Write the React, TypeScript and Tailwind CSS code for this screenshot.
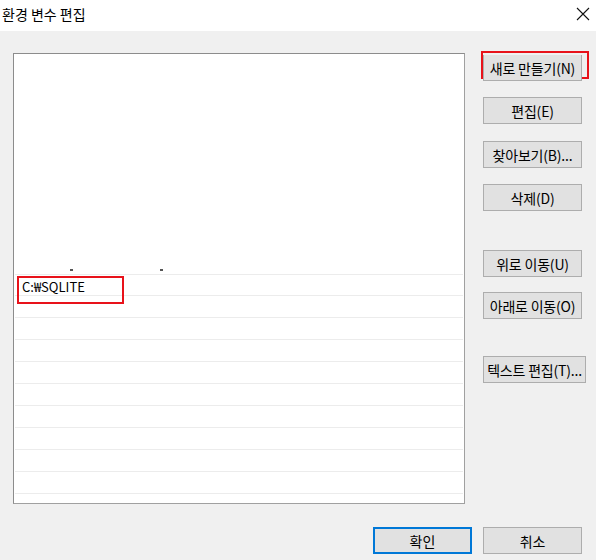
import React from "react";

const F = "font-['Noto_Sans_CJK_KR',sans-serif]";

function Btn({ label, className = "", w = "w-[99px]" }: { label: string; className?: string; w?: string }) {
  return (
    <div
      className={`${w} h-[27px] bg-[#e1e1e1] border border-[#adadad] flex items-center justify-center text-[14px] tracking-[-0.2px] text-black leading-none whitespace-nowrap ${className}`}
    >
      {label}
    </div>
  );
}

export default function App() {
  const lowerRows = Array.from({ length: 10 });
  const upperRows = Array.from({ length: 9 });
  return (
    <div className={`w-[596px] h-[560px] flex flex-col bg-[#f0f0f0] overflow-hidden ${F}`}>
      <div className="h-[31px] bg-white flex items-center justify-between pl-[2px] pr-[6px]">
        <span className="text-[14px] text-black leading-none -mt-[4px]">환경 변수 편집</span>
        <svg width="14" height="14" viewBox="0 0 14 14" className="-mt-[4px]">
          <path d="M1 1 L13 13 M13 1 L1 13" stroke="#111" strokeWidth="1.1" />
        </svg>
      </div>
      <div className="flex-1 flex flex-col">
        <div className="flex">
          <div className="ml-[13px] mt-[22px] w-[452px] h-[451px] bg-white border border-[#a0a0a0] border-t-[#8c8c8c] border-l-[#8c8c8c] px-[1px] flex flex-col">
            {upperRows.map((_, i) => (
              <div key={i} className="h-[22px] shrink-0" />
            ))}
            <div className="h-[22px] shrink-0 relative">
              <span className="absolute left-[55px] top-[17px] w-[3px] h-[2px] bg-[#555]" />
              <span className="absolute left-[145px] top-[17px] w-[3px] h-[2px] bg-[#555]" />
            </div>
            {lowerRows.map((_, i) => (
              <div
                key={i}
                className={`h-[22px] shrink-0 border-b border-[#ececec] ${i === 0 ? "border-t" : ""} flex items-center relative`}
              >
                {i === 0 && (
                  <div className="absolute left-[2px] top-[1px] w-[107px] h-[28px] border-2 border-[#e8121a] flex items-start pl-[3px] pt-[0px]">
                    <span className="text-[13px] leading-[17px] text-black">C:₩SQLITE</span>
                  </div>
                )}
              </div>
            ))}
          </div>
          <div className="ml-[18px] mt-[20px] flex flex-col">
            <div className="border-2 border-[#e8121a] w-[108px] h-[28px] -ml-[2px] flex">
              <div className="mt-[2px] w-[99px] h-[26px] bg-[#e1e1e1] border border-[#adadad] border-t-0 flex items-center justify-center text-[14px] tracking-[-0.2px] leading-none whitespace-nowrap">
                새로 만들기(N)
              </div>
            </div>
            <Btn label="편집(E)" className="mt-[18px]" />
            <Btn label="찾아보기(B)..." className="mt-[17px]" />
            <Btn label="삭제(D)" className="mt-[16px]" />
            <Btn label="위로 이동(U)" className="mt-[39px]" />
            <Btn label="아래로 이동(O)" className="mt-[15px]" />
            <Btn label="텍스트 편집(T)..." className="mt-[37px]" w="w-[103px]" />
          </div>
        </div>
        <div className="flex justify-end gap-[11px] pr-[14px] mt-[23px]">
          <div className="w-[99px] h-[27px] bg-[#e1e1e1] border-2 border-[#0078d7] flex items-center justify-center text-[14px] leading-none">
            확인
          </div>
          <Btn label="취소" />
        </div>
      </div>
    </div>
  );
}
